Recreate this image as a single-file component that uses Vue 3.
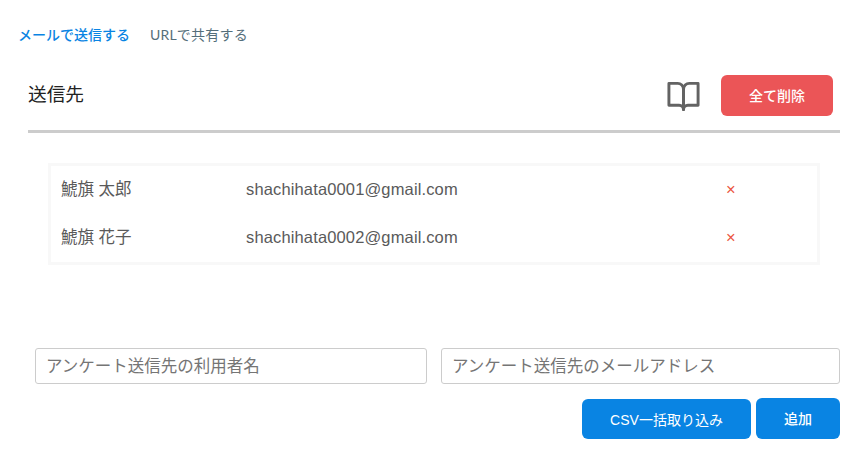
<!-- SendTargets.vue -->
<template>
  <div class="page">
    <nav class="tabs">
      <a
        v-for="tab in tabs"
        :key="tab.id"
        :class="['tab', tab.id, { active: tab.id === currentTab }]"
        @click="currentTab = tab.id"
      >{{ tab.label }}</a>
    </nav>

    <header class="heading">
      <h2 class="title">送信先</h2>
      <svg class="book" viewBox="0 0 24 24" fill="none" stroke="currentColor" stroke-width="2" stroke-linecap="round" stroke-linejoin="round">
        <path d="M2 3h6a4 4 0 0 1 4 4v14a3 3 0 0 0-3-3H2z" />
        <path d="M22 3h-6a4 4 0 0 0-4 4v14a3 3 0 0 1 3-3h7z" />
      </svg>
      <button class="btn danger" @click="clearAll">全て削除</button>
    </header>

    <ul class="list">
      <li v-for="(user, i) in users" :key="user.email" class="row">
        <span class="name">{{ user.name }}</span>
        <span class="email">{{ user.email }}</span>
        <span class="remove" @click="removeUser(i)">×</span>
      </li>
    </ul>

    <div class="inputs">
      <input v-model="name" class="field name-field" type="text" placeholder="アンケート送信先の利用者名" />
      <input v-model="email" class="field email-field" type="text" placeholder="アンケート送信先のメールアドレス" />
    </div>

    <div class="actions">
      <button class="btn csv">CSV一括取り込み</button>
      <button class="btn add" @click="addUser">追加</button>
    </div>
  </div>
</template>

<script setup>
import { ref } from 'vue';

const tabs = [
  { id: 'mail', label: 'メールで送信する' },
  { id: 'url', label: 'URLで共有する' },
];
const currentTab = ref('mail');

const users = ref([
  { name: '鯱旗 太郎', email: 'shachihata0001@gmail.com' },
  { name: '鯱旗 花子', email: 'shachihata0002@gmail.com' },
]);

const name = ref('');
const email = ref('');

const addUser = () => {
  if (!name.value || !email.value) return;
  users.value.push({ name: name.value, email: email.value });
  name.value = '';
  email.value = '';
};

const removeUser = (index) => {
  users.value.splice(index, 1);
};

const clearAll = () => {
  users.value = [];
};
</script>

<style>
body {
  background: #fff;
}
</style>

<style scoped>
.page {
  box-sizing: border-box;
  width: 858px;
  height: 452px;
  padding: 24px 18px 0;
  overflow: hidden;
  font-family: "Liberation Sans", "Noto Sans CJK JP", sans-serif;
  color: #5a5a5a;
}

.tabs {
  display: flex;
  gap: 20px;
  height: 22px;
  font-family: Lato, "Noto Sans CJK JP", sans-serif;
  font-size: 14px;
  line-height: 22px;
}

.tab {
  color: #546e7a;
  cursor: pointer;
}

.tab.url {
  letter-spacing: 0.2px;
}

.tab.active {
  color: #0984e3;
  font-weight: 500;
}

.heading {
  display: flex;
  align-items: center;
  box-sizing: border-box;
  height: 87px;
  margin: 0 0 0 10px;
  padding: 12px 7px 0 0;
  border-bottom: 3px solid #ccc;
}

.title {
  flex: 1;
  margin: 0 0 4px;
  color: #222;
  font-size: 18.7px;
  font-weight: 400;
}

.book {
  width: 35px;
  height: 35px;
  margin: 5px 20px 0 0;
  color: #636363;
}

.btn {
  height: 41px;
  padding: 1px 0 0;
  border: 0;
  border-radius: 6px;
  background: #0984e3;
  color: #fff;
  font-family: "Liberation Sans", "Noto Sans CJK JP", sans-serif;
  font-size: 14px;
  line-height: 20px;
  cursor: pointer;
}

.danger {
  width: 112px;
  margin-top: 3px;
  background: #eb5557;
  font-weight: 500;
}

.list {
  box-sizing: border-box;
  width: 772px;
  height: 102px;
  margin: 30px 0 0 30px;
  padding: 0 10px;
  border: 3px solid #f8f8f8;
  list-style: none;
}

.row {
  display: flex;
  height: 48px;
  font-size: 16.5px;
  line-height: 46px;
}

.name {
  width: 185px;
}

.email {
  width: 480px;
  letter-spacing: 0.14px;
}

.remove {
  color: #eb5540;
  cursor: pointer;
}

.inputs {
  display: flex;
  gap: 14px;
  margin: 83px 0 0 17px;
}

.field {
  box-sizing: border-box;
  height: 36px;
  padding: 0 10px;
  border: 1px solid #ccc;
  border-radius: 3px;
  color: #5a5a5a;
  font-family: "Liberation Sans", "Noto Sans CJK JP", sans-serif;
  font-size: 16.5px;
}

.field::placeholder {
  color: #757575;
}

.name-field {
  width: 392px;
}

.email-field {
  width: 399px;
}

.actions {
  display: flex;
  justify-content: flex-end;
  align-items: flex-end;
  gap: 5px;
  margin-top: 14px;
}

.csv {
  width: 169px;
  height: 40px;
  padding-top: 2px;
}

.add {
  width: 84px;
  font-weight: 500;
}
</style>
